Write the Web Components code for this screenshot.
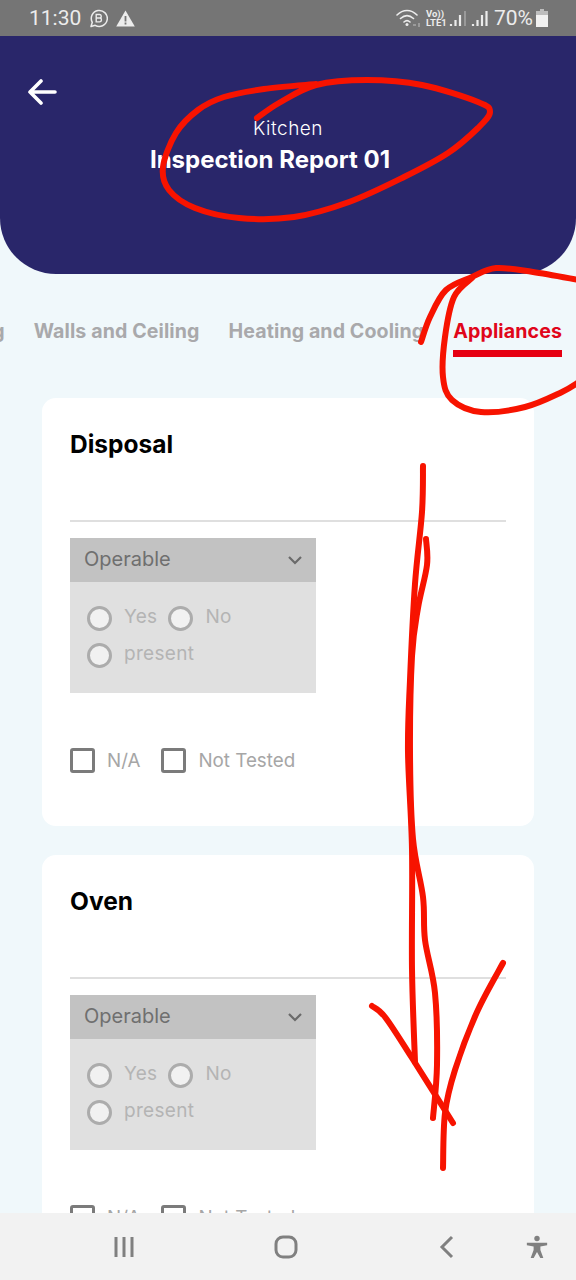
<!DOCTYPE html>
<html lang="en">
<head>
<meta charset="utf-8">
<title>Inspection Report</title>
<style>
html, body { margin: 0; padding: 0; background: #f0f8fb; }
body { font-family: "Inter", "Noto Sans", sans-serif; }
</style>
</head>
<body>
<report-app>
  <status-bar slot="status"></status-bar>
  <report-header slot="header" room="Kitchen" title-text="Inspection Report 01"></report-header>
  <tab-strip slot="tabs">
    <tab-item>Plumbing</tab-item>
    <tab-item>Walls and Ceiling</tab-item>
    <tab-item>Heating and Cooling</tab-item>
    <tab-item active>Appliances</tab-item>
  </tab-strip>
  <inspection-card name="Disposal"></inspection-card>
  <inspection-card name="Oven"></inspection-card>
  <nav-bar slot="nav"></nav-bar>
  <red-scribble slot="overlay"></red-scribble>
</report-app>

<script>
class ReportApp extends HTMLElement {
  constructor() {
    super();
    this.attachShadow({ mode: "open" });
    this.shadowRoot.innerHTML = `
<style>
:host { display: flex; flex-direction: column; position: relative; width: 576px; height: 1280px; overflow: hidden; background: #f0f8fb; }
main { flex: 1; min-height: 0; overflow: hidden; display: flex; flex-direction: column; gap: 29px; }
</style>
<slot name="status"></slot>
<slot name="header"></slot>
<main>
  <slot name="tabs"></slot>
  <slot></slot>
</main>
<slot name="nav"></slot>
<slot name="overlay"></slot>`;
  }
}

class StatusBar extends HTMLElement {
  constructor() {
    super();
    this.attachShadow({ mode: "open" });
    this.shadowRoot.innerHTML = `
<style>
:host { display: flex; align-items: center; flex: none; height: 36px; padding: 0 28px 0 29px; box-sizing: border-box; background: #757575; color: #ececec; font-family: Roboto, sans-serif; font-size: 21px; }
.left, .right { display: flex; align-items: center; }
.left { gap: 8px; }
.right { margin-left: auto; }
svg { display: block; fill: none; flex: none; }
.lte { display: flex; flex-direction: column; width: 21px; font-size: 9.5px; font-weight: 700; line-height: 9px; margin: 0 2px 0 4px; }
.pct { margin: 0 3px 0 6px; }
</style>
<div class="left">
  <span>11:30</span>
  <svg width="19" height="19" viewBox="0 0 19 19"><path d="M2 17.500l1.300-4.200A8 8 0 1 1 6.200 16.300z" stroke="#ececec" stroke-width="1.500" stroke-linejoin="round"/><path d="M7.200 5.500h3.300a1.800 1.800 0 0 1 .6 3.500 2 2 0 0 1-.5 3.900H7.200zM7.200 9h3.800" stroke="#ececec" stroke-width="1.400"/></svg>
  <svg width="19" height="17" viewBox="0 0 19 17"><path d="M9.500 .5L18.800 16.500H.2z" fill="#ececec"/><path d="M9.500 6v5.500M9.500 12.600v1.800" stroke="#757575" stroke-width="1.800"/></svg>
</div>
<div class="right">
  <svg width="26" height="20" viewBox="0 0 26 20"><path d="M1 7C7 1 15 1 21 7M4.500 10.500C9 6.500 13 6.500 17.500 10.500M8 14c2.300-2 3.700-2 6 0" stroke="#ececec" stroke-width="1.600" stroke-linecap="round"/><circle cx="11" cy="16.500" r="1.500" fill="#ececec"/><path d="M17 17h3M23 15v4" stroke="#a8a8a8" stroke-width="1.500"/></svg>
  <div class="lte"><span>Vo))</span><span>LTE1</span></div>
  <svg width="18" height="20" viewBox="0 0 18 20"><path d="M2 18v-2M6.500 18v-6M11 18V7" stroke="#ececec" stroke-width="2.200"/><path d="M16 18V3" stroke="#aaa" stroke-width="1.400"/></svg>
  <svg style="margin-left:4px" width="17" height="20" viewBox="0 0 17 20"><path d="M2 18v-2M6.500 18v-6M11 18V7M15.500 18V3" stroke="#ececec" stroke-width="2.200"/></svg>
  <span class="pct">70%</span>
  <svg width="12" height="18" viewBox="0 0 12 18"><path d="M4 0h4v2H4z" fill="#bdbdbd"/><path d="M0 2h12v4H0z" fill="#bdbdbd"/><path d="M0 6h12v12H0z" fill="#f1f1f1"/></svg>
</div>`;
  }
}

class ReportHeader extends HTMLElement {
  constructor() {
    super();
    this.attachShadow({ mode: "open" });
    this.shadowRoot.innerHTML = `
<style>
:host { display: block; flex: none; height: 238px; box-sizing: border-box; padding: 41px 28px 0; background: #29266a; border-radius: 0 0 56px 56px; color: #fff; }
svg { display: block; }
.titles { display: flex; flex-direction: column; align-items: center; margin: 9px -28px 0; }
.room { font-size: 19px; line-height: 26px; letter-spacing: .5px; font-weight: 300; }
.name { font-size: 24px; line-height: 36px; font-weight: 700; margin-left: -36px; }
</style>
<svg width="30" height="30" viewBox="0 0 30 30" fill="none"><path d="M2 15h25M13 4L2 15l11 11" stroke="#fff" stroke-width="3.600" stroke-linecap="round" stroke-linejoin="round"/></svg>
<div class="titles">
  <span class="room"></span>
  <span class="name"></span>
</div>`;
  }
  connectedCallback() {
    this.shadowRoot.querySelector(".room").textContent = this.getAttribute("room");
    this.shadowRoot.querySelector(".name").textContent = this.getAttribute("title-text");
  }
}

class TabStrip extends HTMLElement {
  constructor() {
    super();
    this.attachShadow({ mode: "open" });
    this.shadowRoot.innerHTML = `
<style>
:host { display: flex; justify-content: flex-end; gap: 29px; flex: none; height: 95px; padding: 42px 14px 0 0; box-sizing: border-box; overflow: hidden; }
</style>
<slot></slot>`;
  }
}

class TabItem extends HTMLElement {
  constructor() {
    super();
    this.attachShadow({ mode: "open" });
    this.shadowRoot.innerHTML = `
<style>
:host { display: block; flex: none; height: 41px; font-size: 19.6px; line-height: 30px; font-weight: 700; letter-spacing: .1px; color: #a9a9ab; white-space: nowrap; box-sizing: border-box; }
:host([active]) { color: #e0061a; border-bottom: 7px solid #e60012; }
</style>
<slot></slot>`;
  }
}

class InspectionCard extends HTMLElement {
  constructor() {
    super();
    this.attachShadow({ mode: "open" });
    this.shadowRoot.innerHTML = `
<style>
:host { display: block; flex: none; margin: 0 42px; padding: 28px 28px 53px; background: #fff; border-radius: 14px; box-sizing: border-box; height: 428px; }
h2 { margin: 0 0 58px; font-size: 24.5px; line-height: 36px; font-weight: 700; color: #000; }
hr { margin: 0 0 16px; border: 0; height: 2px; background: #dfdfdf; }
.checks { display: flex; gap: 21px; margin-top: 55px; }
</style>
<h2></h2>
<hr>
<option-select label="Operable"></option-select>
<div class="checks">
  <check-field>N/A</check-field>
  <check-field>Not Tested</check-field>
</div>`;
  }
  connectedCallback() {
    this.shadowRoot.querySelector("h2").textContent = this.getAttribute("name");
  }
}

class OptionSelect extends HTMLElement {
  constructor() {
    super();
    this.attachShadow({ mode: "open" });
    this.shadowRoot.innerHTML = `
<style>
:host { display: block; width: 246px; background: #e0e0e0; }
.head { display: flex; align-items: center; justify-content: space-between; height: 44px; padding: 0 13px 2px 14px; box-sizing: border-box; background: #c2c2c2; color: #6f6f6f; font-size: 20px; }
.body { display: flex; flex-direction: column; gap: 12px; height: 111px; padding: 24px 0 0 17px; box-sizing: border-box; }
.row { display: flex; gap: 11px; }
svg { display: block; margin-top: 2px; }
</style>
<div class="head">
  <span class="label"></span>
  <svg width="16" height="10" viewBox="0 0 16 10" fill="none"><path d="M2 2l6 6 6-6" stroke="#6a6a6a" stroke-width="2.200"/></svg>
</div>
<div class="body">
  <div class="row"><radio-field>Yes</radio-field><radio-field>No</radio-field></div>
  <div class="row"><radio-field>present</radio-field></div>
</div>`;
  }
  connectedCallback() {
    this.shadowRoot.querySelector(".label").textContent = this.getAttribute("label");
  }
}

class RadioField extends HTMLElement {
  constructor() {
    super();
    this.attachShadow({ mode: "open" });
    this.shadowRoot.innerHTML = `
<style>
:host { display: flex; gap: 12px; color: #b4b4b4; font-size: 19px; line-height: 22px; letter-spacing: .3px; }
i { display: block; flex: none; width: 25px; height: 25px; box-sizing: border-box; border: 3px solid #acacac; border-radius: 50%; background: #f1f1f1; }
</style>
<i></i><slot></slot>`;
  }
}

class CheckField extends HTMLElement {
  constructor() {
    super();
    this.attachShadow({ mode: "open" });
    this.shadowRoot.innerHTML = `
<style>
:host { display: flex; align-items: center; gap: 12px; color: #a6a6a6; font-size: 18.8px; line-height: 25px; }
i { display: block; flex: none; width: 25px; height: 25px; box-sizing: border-box; border: 3px solid #7b7b7b; border-radius: 3px; background: #fff; }
</style>
<i></i><slot></slot>`;
  }
}

class NavBar extends HTMLElement {
  constructor() {
    super();
    this.attachShadow({ mode: "open" });
    this.shadowRoot.innerHTML = `
<style>
:host { display: flex; align-items: center; flex: none; height: 67px; background: #f2f2f2; position: relative; }
svg { display: block; flex: none; fill: none; stroke: #808080; }
</style>
<svg style="margin-left:112px" width="24" height="24" viewBox="0 0 24 24" stroke-width="3"><path d="M4 2v20M12 2v20M20 2v20"/></svg>
<svg style="margin-left:137px" width="26" height="26" viewBox="0 0 26 26" stroke-width="3"><rect x="3" y="3" width="20" height="20" rx="7"/></svg>
<svg style="margin-left:140px" width="16" height="24" viewBox="0 0 16 24" stroke-width="3"><path d="M13 2L3 12l10 10"/></svg>
<svg style="margin-left:71px" width="22" height="26" viewBox="0 0 26 28" stroke-width="0"><circle cx="13" cy="4" r="3.200" fill="#808080"/><path d="M1 9h24v3l-8 1.500v4l3.500 9.500h-3.600L13 20l-3.900 7H5.500L9 17.500v-4L1 12z" fill="#808080"/></svg>`;
  }
}

// hand-drawn marks, points read off the picture
const scribbles = [
  [[257,118],[279,103],[316,85],[367,80],[422,85],[478,102],[490,112],[478,128],[448,153],[404,177],[349,202],[294,217],[239,218],[195,208],[169,190],[163,167],[176,133],[198,110],[224,97],[264,89],[316,84]],
  [[421,342],[430,317],[446,290],[472,277],[496,268],[533,272],[579,280]],
  [[472,278],[454,297],[445,337],[443,377],[452,400],[481,412],[525,407],[562,392],[579,382]],
  [[423,466],[422,512],[415,584],[410,680],[408,752],[412,849],[412,969],[415,1062]],
  [[426,539],[427,565],[418,608],[412,656],[410,752],[413,839],[423,897],[425,940],[435,993],[437,1065],[433,1118]],
  [[372,1006],[385,1017],[412,1058],[453,1123]],
  [[503,963],[477,1012],[455,1070],[445,1113],[443,1168]]
];

function smoothPath(pts) {
  let d = `M${pts[0][0]} ${pts[0][1]}`;
  for (let i = 0; i < pts.length - 1; i++) {
    const p0 = pts[i - 1] || pts[i], p1 = pts[i], p2 = pts[i + 1], p3 = pts[i + 2] || p2;
    const c1 = [p1[0] + (p2[0] - p0[0]) / 6, p1[1] + (p2[1] - p0[1]) / 6];
    const c2 = [p2[0] - (p3[0] - p1[0]) / 6, p2[1] - (p3[1] - p1[1]) / 6];
    d += `C${c1[0]} ${c1[1]} ${c2[0]} ${c2[1]} ${p2[0]} ${p2[1]}`;
  }
  return d;
}

class RedScribble extends HTMLElement {
  constructor() {
    super();
    this.attachShadow({ mode: "open" });
    this.shadowRoot.innerHTML = `
<style>
:host { display: block; position: absolute; inset: 0; pointer-events: none; }
svg { display: block; fill: none; stroke: #f71300; stroke-width: 6; stroke-linecap: round; stroke-linejoin: round; }
</style>
<svg width="576" height="1280" viewBox="0 0 576 1280">
  ${scribbles.map(p => `<path d="${smoothPath(p)}"/>`).join("")}
</svg>`;
  }
}

customElements.define("report-app", ReportApp);
customElements.define("status-bar", StatusBar);
customElements.define("report-header", ReportHeader);
customElements.define("tab-strip", TabStrip);
customElements.define("tab-item", TabItem);
customElements.define("inspection-card", InspectionCard);
customElements.define("option-select", OptionSelect);
customElements.define("radio-field", RadioField);
customElements.define("check-field", CheckField);
customElements.define("nav-bar", NavBar);
customElements.define("red-scribble", RedScribble);
</script>
</body>
</html>
